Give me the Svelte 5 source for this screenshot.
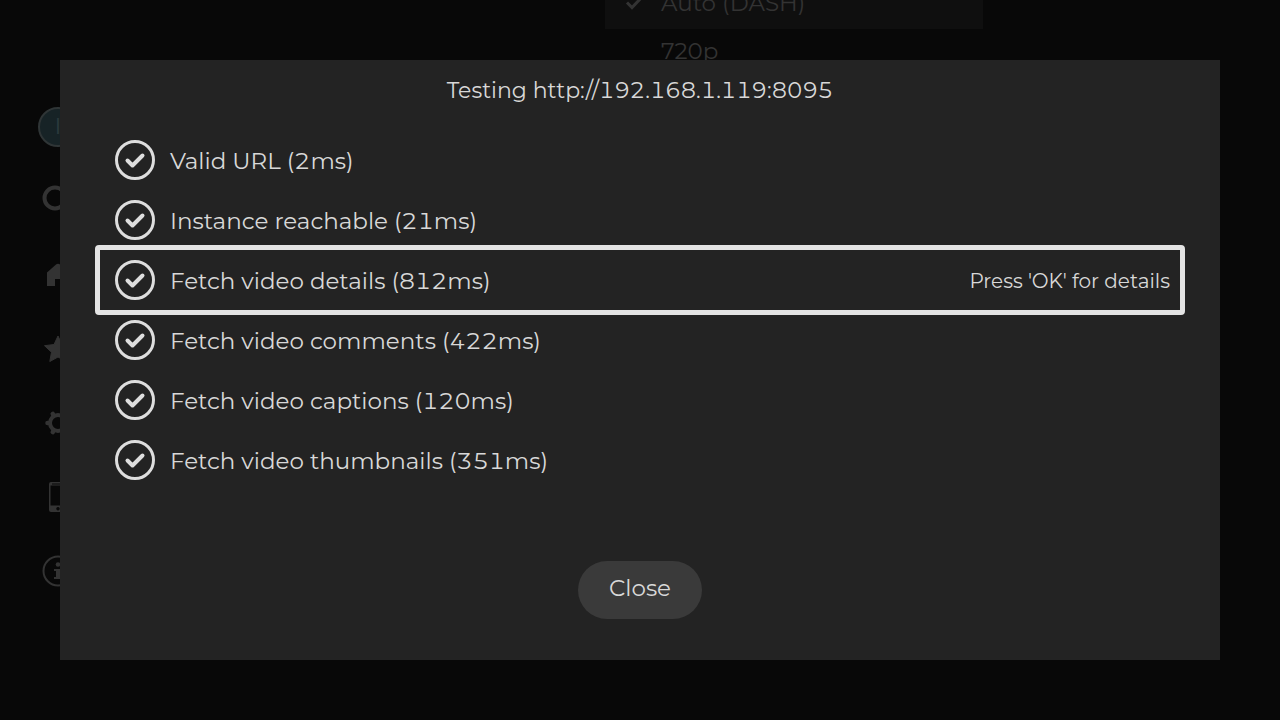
<script>
  const tests = [
    { label: 'Valid URL', ms: 2 },
    { label: 'Instance reachable', ms: 21 },
    { label: 'Fetch video details', ms: 812 },
    { label: 'Fetch video comments', ms: 422 },
    { label: 'Fetch video captions', ms: 120 },
    { label: 'Fetch video thumbnails', ms: 351 },
  ];
  let focused = $state(2);
</script>

<div class="screen">
  <div class="page" inert>
    <nav class="rail" aria-label="Main menu">
      <span class="avatar">I</span>
      <svg viewBox="0 0 44 44"><circle cx="19" cy="19" r="10.500" fill="none" stroke="currentColor" stroke-width="4" /><path d="M27 27l10 10" stroke="currentColor" stroke-width="4" stroke-linecap="round" /></svg>
      <svg viewBox="0 0 44 44"><path d="M11 19.500L20 11.500q2-1.500 4 0L33 19.500V33h-8v-7h-6v7h-8z" fill="currentColor" /></svg>
      <svg viewBox="0 0 44 44"><path d="M22 9l4 8.500 9.500 1.200-7 6.500 1.700 9.300L22 30l-8.200 4.500 1.700-9.300-7-6.500 9.500-1.200z" fill="currentColor" stroke="currentColor" stroke-linejoin="round" /></svg>
      <svg viewBox="0 0 44 44">
        <circle cx="22" cy="22" r="8" fill="none" stroke="currentColor" stroke-width="4" />
        {#each [0, 60, 120, 180, 240, 300] as angle}
          <path d="M12.500 22h-1" stroke="currentColor" stroke-width="4.500" stroke-linecap="round" transform="rotate({angle} 22 22)" />
        {/each}
      </svg>
      <svg viewBox="0 0 44 44"><path fill-rule="evenodd" d="M15 7h14q2 0 2 2v26q0 2-2 2H15q-2 0-2-2V9q0-2 2-2zM14.500 10.500v20h15v-20zM22 32a1.700 1.700 0 1 0 .01 0z" fill="currentColor" /><path d="M16 9h12" stroke="#080808" stroke-width="1" /></svg>
      <svg viewBox="0 0 44 44"><circle cx="22" cy="22" r="14.500" fill="none" stroke="currentColor" stroke-width="2" /><circle cx="22" cy="15.500" r="2.300" fill="currentColor" /><path d="M18 20h6v8h2v2h-8v-2h2v-6h-2z" fill="currentColor" /></svg>
    </nav>
    <ul class="options">
      <li class="current">
        <svg viewBox="0 0 20 20"><path d="M2 9.500l5 5L18 3" fill="none" stroke="currentColor" stroke-width="3" /></svg>
        Auto (DASH)
      </li>
      <li><span></span>720p</li>
    </ul>
  </div>

  <div class="dialog" role="dialog" aria-modal="true" aria-labelledby="title">
    <h1 id="title">Testing http://192.168.1.119:8095</h1>
    <ul class="tests">
      {#each tests as test, i}
        <li>
          <button class="test" class:focused={i === focused} onfocus={() => (focused = i)}>
            <svg viewBox="0 0 40 40" aria-hidden="true">
              <circle cx="20" cy="20" r="18.500" />
              <path d="M12.500 20.500l5 5L27.500 15.500" />
            </svg>
            <span class="label">{test.label} ({test.ms}ms)</span>
            {#if i === focused}
              <span class="hint">Press 'OK' for details</span>
            {/if}
          </button>
        </li>
      {/each}
    </ul>
    <button class="close">Close</button>
  </div>
</div>

<style>
  :global(body) {
    background: #080808;
  }
  .screen {
    display: grid;
    min-height: 100vh;
    overflow: hidden;
    font: 400 23px/30px Gotham, Montserrat, Inter, sans-serif;
    font-variant-numeric: tabular-nums;
    color: #d8d8d8;
  }
  .page,
  .dialog {
    grid-area: 1 / 1;
  }
  .page {
    display: flex;
    height: 0;
    color: #333;
  }
  .rail {
    display: flex;
    flex-direction: column;
    align-items: center;
    gap: 30px;
    width: 44px;
    padding: 107px 0 0 36px;
  }
  .rail svg {
    flex: none;
    width: 44px;
    height: 44px;
  }
  .avatar {
    box-sizing: border-box;
    width: 40px;
    height: 40px;
    margin-bottom: 2px;
    flex: none;
    border: 2px solid #2f3536;
    border-radius: 50%;
    background: #172326;
    color: #2b3a3d;
    line-height: 35px;
    text-align: center;
  }
  ul {
    margin: 0;
    padding: 0;
    list-style: none;
  }
  .options {
    width: 378px;
    margin: -19px 0 0 525px;
    font-size: 23px;
    font-variant-numeric: normal;
  }
  .options li {
    display: flex;
    align-items: center;
    gap: 16px;
    box-sizing: border-box;
    height: 48px;
    padding: 0 0 4px 20px;
  }
  .options .current {
    background: #0f0f0f;
  }
  .options svg,
  .options span {
    width: 20px;
    height: 20px;
  }
  .dialog {
    display: flex;
    flex-direction: column;
    z-index: 1;
    box-sizing: border-box;
    margin: 60px;
    padding: 16px 40px 41px;
    background: #232323;
  }
  h1 {
    margin: 0 0 24px;
    font-size: 22px;
    font-weight: 400;
    line-height: 30px;
    text-align: center;
  }
  button {
    border: 0;
    font: inherit;
    font-variant-numeric: inherit;
    color: inherit;
    outline: none;
  }
  .test {
    position: relative;
    display: flex;
    align-items: center;
    gap: 15px;
    width: 100%;
    height: 60px;
    padding: 0 10px 0 15px;
    background: none;
    text-align: left;
  }
  .focused::after {
    content: '';
    position: absolute;
    inset: -5px;
    border: 5px solid #e4e4e4;
    border-radius: 4px;
  }
  .test svg {
    flex: none;
    width: 40px;
    height: 40px;
    fill: none;
    stroke: #dedede;
    stroke-width: 3;
    stroke-linecap: round;
    stroke-linejoin: round;
  }
  .test path {
    stroke-width: 4;
  }
  .label {
    flex: 1;
    padding-top: 2px;
  }
  .hint {
    padding-top: 2px;
    font-size: 20px;
  }
  .close {
    align-self: center;
    height: 58px;
    margin-top: auto;
    padding: 0 31px 4px;
    border-radius: 29px;
    background: #3a3a3a;
  }
</style>
